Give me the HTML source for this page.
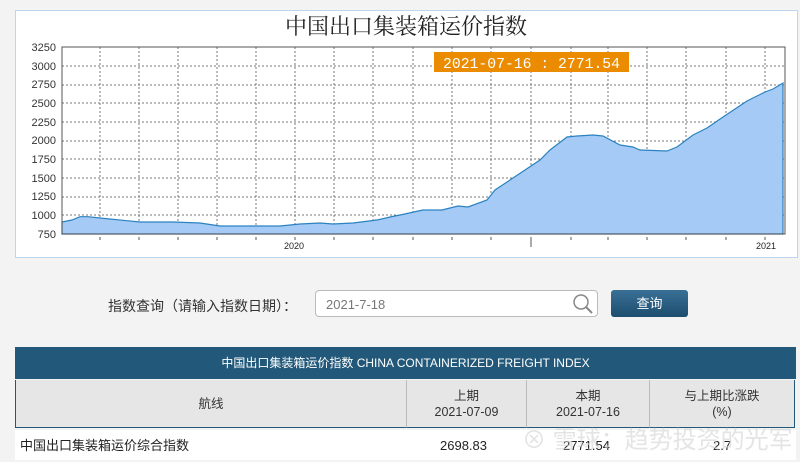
<!DOCTYPE html>
<html><head><meta charset="utf-8"><style>
body{margin:0;width:800px;height:460px;background:#f3f3f3;font-family:"Liberation Sans","Noto Sans CJK SC",sans-serif;position:relative;overflow:hidden}
.box{position:absolute;left:15px;top:10px;width:783px;height:248px;background:#fff;border:1px solid #bcd6f0;box-sizing:border-box}
.title{position:absolute;left:0;width:812px;top:10px;text-align:center;font-size:22px;color:#222;font-family:"Liberation Serif","Noto Serif CJK SC",serif}
.lab{position:absolute;left:108px;top:296px;font-size:14px;color:#333}
.inp{position:absolute;left:315px;top:290px;width:283px;height:27px;border:1px solid #bbb;border-radius:4px;background:#fff;box-sizing:border-box;font-size:13px;color:#777;padding:6px 10px}
.btn{position:absolute;left:611px;top:290px;width:77px;height:27px;border-radius:3px;background:linear-gradient(#3a7096,#1c4d6e);color:#fff;font-size:13px;text-align:center;line-height:27px}
.hd{position:absolute;left:15px;top:347px;width:781px;height:32px;background:#22597a;color:#fff;font-size:12px;text-align:center;line-height:32px}
.c{position:absolute;top:380px;height:48px;background:#e6e6e6;border:1px solid #22597a;border-top:none;box-sizing:border-box;font-size:12.5px;color:#333;text-align:center;display:flex;align-items:center;justify-content:center;line-height:16px;border-right:1px solid #bbb}
.r{position:absolute;top:430px;height:30px;background:#fff;font-size:13px;color:#222;line-height:32px}
</style></head><body>
<div class="box"></div>
<div class="title">中国出口集装箱运价指数</div>
<svg style="position:absolute;left:0;top:0" width="800" height="260">
<g font-size="11" fill="#333" text-anchor="end" font-family="Liberation Sans">
<text x="56" y="51">3250</text><text x="56" y="70">3000</text><text x="56" y="88">2750</text><text x="56" y="107">2500</text><text x="56" y="126">2250</text><text x="56" y="144">2000</text><text x="56" y="163">1750</text><text x="56" y="182">1500</text><text x="56" y="200">1250</text><text x="56" y="219">1000</text><text x="56" y="238">750</text>
</g>
<g stroke="#777" stroke-dasharray="2,2" stroke-width="1">
<path d="M62 66H785M62 85H785M62 103H785M62 122H785M62 141H785M62 159H785M62 178H785M62 197H785M62 215H785"/>
<path d="M100 47V234M139 47V234M178 47V234M217 47V234M256 47V234M295 47V234M334 47V234M373 47V234M413 47V234M452 47V234M491 47V234M531 47V234M571 47V234M608 47V234M647 47V234M686 47V234M726 47V234M765 47V234"/>
</g>
<path d="M62 222L72 220L80 216.7L88 216.7L100 218L140 222L173 222L200 223L220 226L280 226L300 224L320 223L333 224L353 223L377 220L390 217L400 215L423 210L442 210L458 206L468 207L487 200L495 190L513 178L540 160L550 150L567 137L577 136L593 135L603 136L620 145L633 147L640 150L667 151L677 147L693 135L707 128L723 117L747 101L765 92L773 89L783 83L783 234L62 234Z" fill="#a5caf5" stroke="#2b82c0" stroke-width="1.2"/>
<rect x="62" y="47" width="723" height="187" fill="none" stroke="#555"/>
<g stroke="#555"><path d="M100 237v3M139 237v3M178 237v3M217 237v3M256 237v3M295 237v3M334 237v3M373 237v3M413 237v3M452 237v3M491 237v3M531 237v10M571 237v3M608 237v3M647 237v3M686 237v3M726 237v3M765 237v3"/></g>
<g font-size="9" fill="#222" text-anchor="middle"><text x="294" y="249">2020</text><text x="766" y="249">2021</text></g>
<rect x="434" y="52" width="195" height="20" fill="#eb8c00"/>
<text x="443" y="68" fill="#fff" font-size="15" font-family="Liberation Mono" textLength="177" lengthAdjust="spacingAndGlyphs">2021-07-16 : 2771.54</text>
</svg>
<div class="lab">指数查询（请输入指数日期）：</div>
<div class="inp">2021-7-18</div>
<svg style="position:absolute;left:572px;top:293px" width="22" height="22"><circle cx="9" cy="9" r="7" fill="none" stroke="#888" stroke-width="1.5"/><path d="M14 14L20 20" stroke="#888" stroke-width="2"/></svg>
<div class="btn">查询</div>
<div class="hd">中国出口集装箱运价指数 CHINA CONTAINERIZED FREIGHT INDEX</div>
<div class="c" style="left:15px;width:392px">航线</div>
<div class="c" style="left:407px;width:120px;border-left:none">上期<br>2021-07-09</div>
<div class="c" style="left:527px;width:123px;border-left:none">本期<br>2021-07-16</div>
<div class="c" style="left:650px;width:145px;border-left:none;border-right:1px solid #22597a">与上期比涨跌<br>(%)</div>
<div class="r" style="left:15px;width:781px"></div>
<div class="r" style="left:20px">中国出口集装箱运价综合指数</div>
<div class="r" style="left:440px">2698.83</div>
<div class="r" style="left:563px">2771.54</div>
<div class="r" style="left:713px">2.7</div>
<div style="position:absolute;left:522px;top:420px;font-size:24px;color:rgba(210,210,210,.6)">⊗ 雪球：趋势投资的光军</div>
</body></html>
